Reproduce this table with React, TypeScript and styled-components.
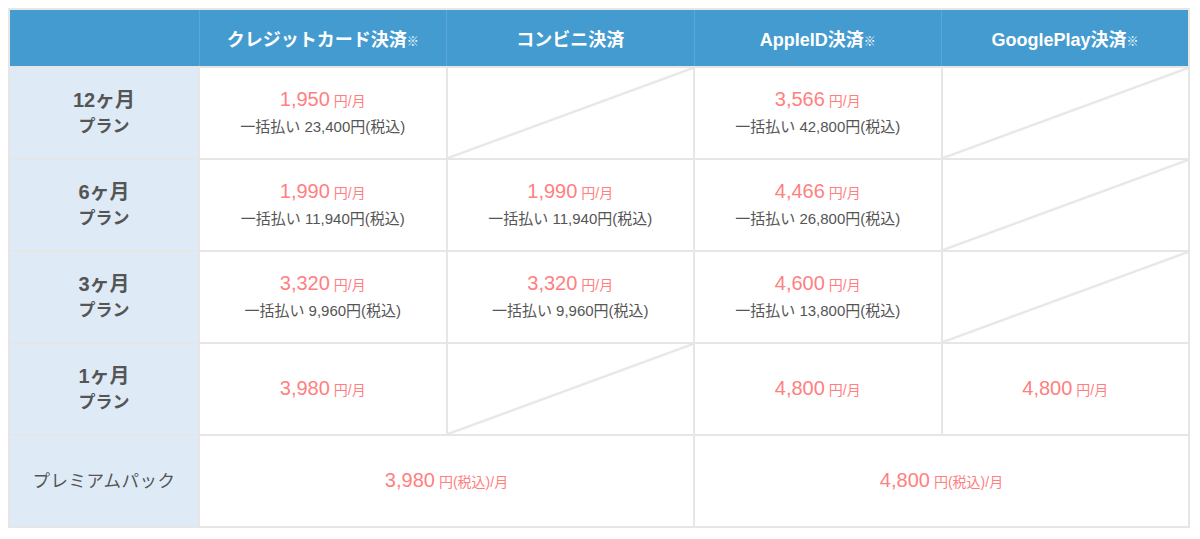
import styled, { createGlobalStyle } from "styled-components";

const GlobalStyle = createGlobalStyle`
    body {
        margin: 8px;
        background: #fff;
        font-family: "Liberation Sans", "Noto Sans CJK JP", sans-serif;
    }
`;

const Table = styled.table`
    width: 1182px;
    border-collapse: collapse;
    table-layout: fixed;
    border: 2px solid #e6e6e6;
`;

const HeadCell = styled.th`
    height: 56px;
    padding: 0;
    background-color: #449bd0;
    color: #fff;
    font-size: 18px;
    font-weight: bold;
    text-align: center;
    border-left: 1px solid #5aa8d8;
    &:first-child {
        border-left: none;
    }
`;

const Note = styled.span`
    font-size: 12px;
    font-weight: bold;
`;

const PlanCell = styled.th`
    height: 90px;
    padding: 0;
    background-color: #deebf7;
    color: #555;
    text-align: center;
    border: 2px solid #e6e6e6;
`;

const PlanName = styled.div`
    font-size: 20px;
    font-weight: bold;
    line-height: 28px;
`;

const PlanSub = styled.div<{ $wide?: boolean }>`
    font-size: ${(p) => (p.$wide ? "17.5px" : "17px")};
    font-weight: ${(p) => (p.$wide ? "normal" : "bold")};
    letter-spacing: ${(p) => (p.$wide ? "0.5px" : "0")};
    line-height: 26px;
`;

const Cell = styled.td<{ $empty?: boolean }>`
    padding: 0;
    text-align: center;
    border: 2px solid #e6e6e6;
    background: ${(p) =>
        p.$empty
            ? "linear-gradient(to bottom right, transparent calc(50% - 2px), #e2e2e2 50%, transparent calc(50% + 2px))"
            : "#fff"};
`;

const Price = styled.div`
    color: #ff8080;
    font-size: 20px;
    line-height: 26px;
`;

const Unit = styled.span`
    font-size: 14px;
    margin-left: 4px;
`;

const Lump = styled.div`
    color: #555;
    font-size: 15px;
    line-height: 26px;
`;

type Entry = { price: string; lump?: string } | null;

const rows: { name: string; cells: Entry[] }[] = [
    {
        name: "12ヶ月",
        cells: [
            { price: "1,950", lump: "23,400" },
            null,
            { price: "3,566", lump: "42,800" },
            null,
        ],
    },
    {
        name: "6ヶ月",
        cells: [
            { price: "1,990", lump: "11,940" },
            { price: "1,990", lump: "11,940" },
            { price: "4,466", lump: "26,800" },
            null,
        ],
    },
    {
        name: "3ヶ月",
        cells: [
            { price: "3,320", lump: "9,960" },
            { price: "3,320", lump: "9,960" },
            { price: "4,600", lump: "13,800" },
            null,
        ],
    },
    {
        name: "1ヶ月",
        cells: [{ price: "3,980" }, null, { price: "4,800" }, { price: "4,800" }],
    },
];

const App = () => {
    return (
        <>
            <GlobalStyle />
            <Table>
                <colgroup>
                    <col style={{ width: 190 }} />
                    <col />
                    <col />
                    <col />
                    <col />
                </colgroup>
                <thead>
                    <tr>
                        <HeadCell />
                        <HeadCell>
                            クレジットカード決済<Note>※</Note>
                        </HeadCell>
                        <HeadCell>コンビニ決済</HeadCell>
                        <HeadCell>
                            AppleID決済<Note>※</Note>
                        </HeadCell>
                        <HeadCell>
                            GooglePlay決済<Note>※</Note>
                        </HeadCell>
                    </tr>
                </thead>
                <tbody>
                    {rows.map((row) => (
                        <tr key={row.name}>
                            <PlanCell>
                                <PlanName>{row.name}</PlanName>
                                <PlanSub>プラン</PlanSub>
                            </PlanCell>
                            {row.cells.map((c, i) =>
                                c ? (
                                    <Cell key={i}>
                                        <Price>
                                            {c.price}
                                            <Unit>円/月</Unit>
                                        </Price>
                                        {c.lump && <Lump>一括払い {c.lump}円(税込)</Lump>}
                                    </Cell>
                                ) : (
                                    <Cell key={i} $empty />
                                )
                            )}
                        </tr>
                    ))}
                    <tr>
                        <PlanCell>
                            <PlanSub $wide>プレミアムパック</PlanSub>
                        </PlanCell>
                        <Cell colSpan={2}>
                            <Price>
                                3,980<Unit>円(税込)/月</Unit>
                            </Price>
                        </Cell>
                        <Cell colSpan={2}>
                            <Price>
                                4,800<Unit>円(税込)/月</Unit>
                            </Price>
                        </Cell>
                    </tr>
                </tbody>
            </Table>
        </>
    );
};

export default App;
